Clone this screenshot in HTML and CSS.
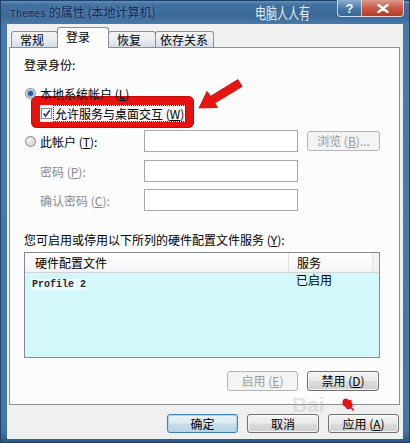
FILE: index.html
```html
<!DOCTYPE html>
<html>
<head>
<meta charset="utf-8">
<link rel="stylesheet" href="styles.css">
</head>
<body>
<div class="window">
  <div class="titlebar">
    <span class="title"><span class="mono">Themes</span> 的属性 (本地计算机)</span>
    <span class="wm">电脑人人有</span>
    <span class="cap help">?</span>
    <span class="cap close"><svg width="12" height="9" viewBox="0 0 12 9"><path d="M1.5 1 L10.5 8 M10.5 1 L1.5 8" stroke="#fff" stroke-width="2.4" stroke-linecap="round"/></svg></span>
  </div>
  <div class="client">
    <div class="tabs">
      <div class="tab t1">常规</div>
      <div class="tab t2 active">登录</div>
      <div class="tab t3">恢复</div>
      <div class="tab t4">依存关系</div>
    </div>
    <div class="panel">
      <div class="label">登录身份:</div>
      <div class="radio-row"><span class="radio on"></span><span>本地系统帐户 (<u>L</u>)</span></div>
      <div class="highlight">
        <div class="check-row">
          <span class="checkbox"><svg width="9" height="9" viewBox="0 0 9 9"><path d="M1.5 4.5 L3.6 7 L7.8 1.2" fill="none" stroke="#1d3f8a" stroke-width="1.7"/></svg></span>
          <span class="focus">允许服务与桌面交互 (<u>W</u>)</span>
        </div>
      </div>
      <div class="form-row first">
        <div class="form-label"><span class="radio"></span><span>此帐户 (<u>T</u>):</span></div>
        <div class="field"></div>
        <div class="btn disabled browse">浏览 (<u>B</u>)...</div>
      </div>
      <div class="form-row indent second">
        <div class="form-label">密码 (<u>P</u>):</div>
        <div class="field"></div>
      </div>
      <div class="form-row indent third">
        <div class="form-label">确认密码 (<u>C</u>):</div>
        <div class="field"></div>
      </div>
      <div class="label label2">您可启用或停用以下所列的硬件配置文件服务 (<u>Y</u>):</div>
      <div class="listbox">
        <div class="lb-head">
          <span class="col1">硬件配置文件</span>
          <span class="col2">服务</span>
          <span class="col3"></span>
        </div>
        <div class="lb-row">
          <span class="col1"><span class="mono item">Profile 2</span></span>
          <span class="col2">已启用</span>
        </div>
      </div>
      <div class="actions">
        <div class="btn disabled w71">启用 (<u>E</u>)</div>
        <div class="btn w72">禁用 (<u>D</u>)</div>
      </div>
    </div>
    <div class="footer">
      <div class="btn default w71">确定</div>
      <div class="btn w72 gap10">取消</div>
      <div class="btn w71 gap10">应用 (<u>A</u>)</div>
    </div>
  </div>
  <svg class="arrow" width="60" height="40" viewBox="190 75 60 40">
    <polygon points="199,108 217.5,107.5 214.8,103.1 242.1,86.4 237.9,79.6 210.6,96.3 207,91.5" fill="#e8140f" stroke="#c00a08" stroke-width="0.8" stroke-linejoin="round"/>
  </svg>
  <span class="baidu">Bai</span>
  <svg class="paw" width="16" height="16" viewBox="0 0 22 20">
    <path d="M4 5 C6 1 11 2 12 5 C14 3 17 5 16 8 C18 10 18 14 15 15 C13 19 8 17 8 14 C5 14 2 10 4 5 Z" fill="#e0141a"/>
    <path d="M15 15 L19 19" stroke="#e0141a" stroke-width="2"/>
  </svg>
</div>
</body>
</html>
```

FILE: styles.css
```css
body {
  margin: 0;
  font-family: "Noto Sans CJK SC", "Noto Sans", sans-serif;
  font-size: 12px;
  color: #000;
}
u { text-decoration: underline; text-underline-offset: 1px; }
.mono { font-family: "Liberation Mono", "DejaVu Sans Mono", monospace; font-size: 10px; }

.window {
  position: relative;
  width: 410px;
  height: 443px;
  box-sizing: border-box;
  display: flex;
  flex-direction: column;
  background: linear-gradient(#6a94bf 0px, #41709e 5px, #3a6997 16px, #4a7aa9 24px, #4676a6 430px, #2a5585 443px);
  box-shadow: inset 0 0 0 1px #1f4368;
}

.titlebar {
  height: 24px;
  display: flex;
  align-items: flex-start;
  padding-right: 6px;
}
.title {
  flex: 1;
  padding-left: 10px;
  margin-top: 4px;
  line-height: 16px;
  color: #14295a;
  text-shadow: 0 0 4px rgba(170, 200, 230, 0.6);
  white-space: nowrap;
}
.wm {
  flex: none;
  width: 56px;
  margin-right: 26px;
  margin-top: 5px;
  font-size: 11px;
  line-height: 14px;
  color: #e4edf6;
  transform: scaleY(1.4);
  white-space: nowrap;
  overflow: visible;
}
.cap {
  flex: none;
  height: 17px;
  box-sizing: border-box;
  display: flex;
  align-items: center;
  justify-content: center;
  border: 1px solid rgba(235, 240, 248, 0.75);
  border-top: none;
}
.help {
  width: 25px;
  border-radius: 0 0 0 4px;
  background: linear-gradient(#8cb0d2, #4a77a3 55%, #3a6894);
  color: #f4f8fc;
  font-weight: bold;
  font-family: "Liberation Sans", sans-serif;
  font-size: 13px;
}
.close {
  width: 42px;
  border-left: none;
  border-radius: 0 0 4px 0;
  background: linear-gradient(#dc9a8c, #c85a48 50%, #b53a28);
}

.client {
  flex: 1;
  margin: 0 7px 4px 7px;
  background: #f0f0f0;
  display: flex;
  flex-direction: column;
}

.tabs {
  display: flex;
  align-items: flex-end;
  height: 23px;
  padding-left: 4px;
  position: relative;
  z-index: 1;
}
.tab {
  height: 16px;
  line-height: 15px;
  box-sizing: border-box;
  border: 1px solid #8c8f97;
  border-bottom: none;
  border-radius: 3px 3px 0 0;
  background: linear-gradient(#f4f4f4, #eaedf1 50%, #d6dde6);
  padding-left: 8px;
  margin-right: -1px;
}
.t1 { width: 47px; }
.t2 { width: 52px; }
.t3 { width: 48px; }
.t4 { width: 59px; padding-left: 4px; }
.tab.active {
  height: 21px;
  line-height: 18px;
  background: #fcfcfc;
  margin-bottom: -1px;
  position: relative;
  z-index: 2;
}

.panel {
  position: relative;
  height: 358px;
  box-sizing: border-box;
  margin: 0 3px 0 2px;
  border: 1px solid #8c8f97;
  background: #fcfcfc;
  padding: 9px 0 0 14px;
}
.label { line-height: 16px; }
.radio-row {
  display: flex;
  align-items: center;
  height: 16px;
  margin-top: 12px;
}
.radio {
  width: 11px;
  height: 11px;
  flex: none;
  border-radius: 50%;
  margin: 0 4px 0 1px;
  box-sizing: border-box;
  border: 1px solid #8a8a8a;
  background: radial-gradient(circle at 40% 35%, #f4f4f4, #c9c9c9);
}
.radio.on {
  background: radial-gradient(circle, #1a4d9c 0, #2f66b4 2px, #7fa2cf 3px, #e4e4e4 4px, #cccccc 100%);
}

.highlight {
  margin-top: -5px;
  margin-left: 7px;
  width: 163px;
  height: 32px;
  box-sizing: border-box;
  padding: 9px 9px 6px 9px;
  background: #e6120f;
  border-radius: 6px;
  box-shadow: inset 0 0 0 1px #c30b0b;
}
.check-row {
  height: 17px;
  background: #f6f6f6;
  display: flex;
  align-items: center;
  padding-left: 1px;
}
.checkbox {
  width: 11px;
  height: 11px;
  flex: none;
  border: 1px solid #8a8a8a;
  box-sizing: border-box;
  background: #fff;
  margin-right: 2px;
  display: flex;
  align-items: center;
  justify-content: center;
}
.focus {
  outline: 1px dotted #333;
  line-height: 15px;
  padding: 0 1px;
  white-space: nowrap;
}

.form-row {
  display: flex;
  align-items: center;
  height: 22px;
}
.form-row.first { margin-top: 2px; }
.form-row.second { margin-top: 8px; }
.form-row.third { margin-top: 7px; }
.form-label {
  width: 120px;
  box-sizing: border-box;
  display: flex;
  align-items: center;
  white-space: nowrap;
}
.indent .form-label {
  padding-left: 16px;
  color: #8a8a8a;
}
.field {
  width: 154px;
  height: 22px;
  box-sizing: border-box;
  border: 1px solid #a7a9ae;
  background: #fff;
}
.browse {
  width: 73px;
  margin-left: 9px;
}

.label2 { margin-top: 21px; }

.listbox {
  margin-top: 4px;
  width: 356px;
  height: 106px;
  box-sizing: border-box;
  border: 1px solid #848890;
  background: #d4f7fb;
}
.lb-head {
  display: flex;
  height: 20px;
  line-height: 19px;
  background: linear-gradient(#ffffff, #f3f4f5);
  border-bottom: 1px solid #d5d5d5;
  box-sizing: border-box;
}
.lb-head .col1 {
  width: 264px;
  box-sizing: border-box;
  padding-left: 10px;
  border-right: 1px solid #e1e2e4;
}
.lb-head .col2 {
  width: 84px;
  box-sizing: border-box;
  padding-left: 8px;
  border-right: 1px solid #e1e2e4;
}
.lb-head .col3 { flex: 1; background: #f2f2f2; }
.lb-row {
  display: flex;
  height: 15px;
  line-height: 15px;
  margin-top: 1px;
}
.lb-row .col1 {
  width: 264px;
  box-sizing: border-box;
  padding-left: 6px;
}
.item {
  font-weight: bold;
  color: #2a2a2a;
  background: #e9fbfd;
  padding: 0 1px;
}
.lb-row .col2 {
  padding-left: 7px;
  margin-top: -2px;
}

.actions {
  display: flex;
  justify-content: flex-end;
  gap: 9px;
  margin-top: 13px;
  padding-right: 20px;
}
.btn {
  height: 20px;
  box-sizing: border-box;
  border: 1px solid #707070;
  border-radius: 3px;
  background: linear-gradient(#f3f3f3, #ebebeb 48%, #dcdcdc 52%, #cfcfcf);
  display: flex;
  align-items: center;
  justify-content: center;
  line-height: 16px;
  white-space: nowrap;
  box-shadow: inset 0 0 0 1px rgba(255, 255, 255, 0.7);
}
.btn.disabled {
  border-color: #b2b6b9;
  background: #f4f4f4;
  color: #9a9a9a;
  box-shadow: none;
}
.btn.default {
  border-color: #3c7fb1;
  background: linear-gradient(#e9f2f7, #dbe9f1 48%, #c8dce8 52%, #bcd3e2);
  box-shadow: inset 0 0 0 1px #a9d6f0;
}
.w71 { width: 71px; }
.w72 { width: 72px; }

.footer {
  display: flex;
  justify-content: flex-end;
  margin-top: 9px;
  padding-right: 4px;
}
.footer .btn { height: 19px; }
.gap10 { margin-left: 9px; }

.arrow {
  position: absolute;
  left: 190px;
  top: 75px;
}
.baidu {
  position: absolute;
  left: 292px;
  top: 393px;
  font-family: "Liberation Sans", sans-serif;
  font-size: 21px;
  font-weight: bold;
  color: rgba(170, 170, 170, 0.3);
}
.paw {
  position: absolute;
  left: 340px;
  top: 396px;
}
```
